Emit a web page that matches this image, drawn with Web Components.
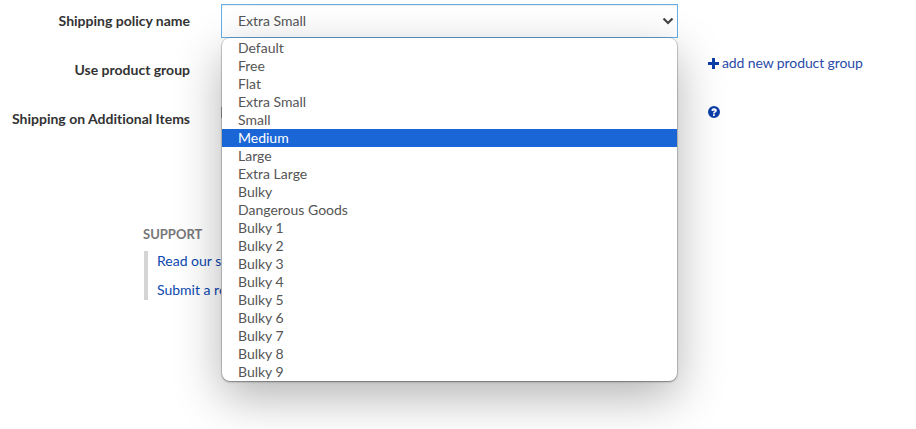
<!DOCTYPE html>
<html lang="en">
<head>
<meta charset="utf-8">
<title>Shipping</title>
<style>
    html, body { margin: 0; height: 429px; overflow: hidden; background: #fff; }
    body { font-family: Lato, "Open Sans", sans-serif; font-size: 14px; color: #444; }
</style>
</head>
<body>
<shipping-page>
    <form-row label="Shipping policy name" style="height:49px">
        <policy-select value="Extra Small" selected="Medium"></policy-select>
    </form-row>
    <form-row label="Use product group" style="height:49px">
        <span slot="aside"><icon-link icon="plus">add new product group</icon-link></span>
    </form-row>
    <form-row label="Shipping on Additional Items" style="height:49px">
        <hidden-edge></hidden-edge>
        <span slot="aside"><icon-link icon="help"></icon-link></span>
    </form-row>
    <support-links heading="SUPPORT">
        <a href="#">Read our s</a>
        <a href="#">Submit a re</a>
    </support-links>
</shipping-page>

<script>
const OPTIONS = ['Default', 'Free', 'Flat', 'Extra Small', 'Small', 'Medium', 'Large', 'Extra Large', 'Bulky', 'Dangerous Goods',
    'Bulky 1', 'Bulky 2', 'Bulky 3', 'Bulky 4', 'Bulky 5', 'Bulky 6', 'Bulky 7', 'Bulky 8', 'Bulky 9'];

class ShippingPage extends HTMLElement {
    connectedCallback() {
        this.attachShadow({ mode: 'open' });
        this.shadowRoot.innerHTML = `
            <style>
                :host { display: block; padding-top: 4px; }
            </style>
            <slot></slot>
        `;
    }
}

class FormRow extends HTMLElement {
    connectedCallback() {
        this.attachShadow({ mode: 'open' });
        this.shadowRoot.innerHTML = `
            <style>
                :host { display: grid; grid-template-columns: 190px 457px auto; column-gap: 31px; box-sizing: border-box; }
                .label { font-weight: 700; color: #333; text-align: right; line-height: 34px; white-space: nowrap; letter-spacing: -0.01px; }
                .aside { margin-left: -1px; line-height: 20px; }
            </style>
            <div class="label">${this.getAttribute('label')}</div>
            <div class="control"><slot></slot></div>
            <div class="aside"><slot name="aside"></slot></div>
        `;
    }
}

// the control under the open list only shows as a sliver on its left edge
class HiddenEdge extends HTMLElement {
    connectedCallback() {
        this.attachShadow({ mode: 'open' });
        this.shadowRoot.innerHTML = `
            <style>
                :host { display: block; width: 1px; height: 11px; margin-top: 5px; background: #aaa; }
            </style>
        `;
    }
}

class PolicySelect extends HTMLElement {
    connectedCallback() {
        this.attachShadow({ mode: 'open' });
        const selected = this.getAttribute('selected');
        this.shadowRoot.innerHTML = `
            <style>
                :host { display: block; position: relative; width: 457px; }
                .box {
                    display: flex; align-items: center; justify-content: space-between;
                    box-sizing: border-box; height: 34px; padding: 0 3px 0 16px;
                    border: 1px solid #66afe9; color: #555; background: #fff;
                    box-shadow: inset 0 1px 1px rgba(0,0,0,.075);
                }
                .box span { margin-top: -2px; }
                .list {
                    position: absolute; left: 1px; top: 34px; width: 455px; z-index: 10;
                    box-sizing: border-box; height: 343px; padding-top: 1px; overflow: hidden;
                    background: #fff; border-radius: 8px;
                    box-shadow: 0 0 0 1px rgba(0,0,0,.12), 0 1px 2px rgba(0,0,0,.35), 0 16px 48px rgba(0,0,0,.3);
                }
                .opt { height: 18px; line-height: 18px; padding-left: 16px; color: #555; white-space: nowrap; }
                .opt.on { background: #1a66d6; color: #fff; }
                svg { display: block; }
            </style>
            <div class="box">
                <span>${this.getAttribute('value')}</span>
                <svg width="12" height="12" viewBox="0 0 12 12"><path d="M1.500 3.500 L6 8 L10.500 3.500" fill="none" stroke="#444" stroke-width="2.2"/></svg>
            </div>
            <div class="list">
                ${OPTIONS.map(o => `<div class="opt ${o === selected ? 'on' : ''}">${o}</div>`).join('')}
            </div>
        `;
    }
}

class IconLink extends HTMLElement {
    connectedCallback() {
        this.attachShadow({ mode: 'open' });
        const icons = {
            plus: '<svg width="11" height="11" viewBox="0 0 11 11"><path d="M4 0h3v4h4v3H7v4H4V7H0V4h4z" fill="#0b3fa8"/></svg>',
            help: '<svg width="12" height="12" viewBox="0 0 12 12"><path fill-rule="evenodd" fill="#0b3fa8" d="M6 0a6 6 0 1 1 0 12A6 6 0 0 1 6 0zM3.400 4.500l1.600.7C5.100 4.700 5.400 4.400 6 4.400c.5 0 .8.2.8.500 0 .7-1.800.8-1.800 2.400v.2h1.800c0-1.100 2-1 2-3 0-1.300-1.300-2.200-2.800-2.200-1.300 0-2.100.6-2.600 1.700zM5 8.300V10h1.800V8.300z"/></svg>'
        };
        this.shadowRoot.innerHTML = `
            <style>
                :host { display: inline-flex; align-items: center; gap: 3px; height: 20px; color: #2a4ba8; white-space: nowrap; letter-spacing: -0.1px; }
            </style>
            ${icons[this.getAttribute('icon')]}
            <slot></slot>
        `;
    }
}

class SupportLinks extends HTMLElement {
    connectedCallback() {
        this.attachShadow({ mode: 'open' });
        this.shadowRoot.innerHTML = `
            <style>
                :host { display: block; margin: 74px 0 0 143px; }
                h4 { margin: 0 0 8px; font-size: 13px; line-height: 18px; font-weight: 700; color: #777; }
                .list {
                    display: flex; flex-direction: column; gap: 10px; overflow: hidden;
                    box-sizing: content-box; width: 64px; height: 49px;
                    margin-left: 1px; padding-left: 9px; border-left: 4px solid #d4d4d4;
                }
                ::slotted(a) { color: #0b48b0; text-decoration: none; line-height: 19px; white-space: nowrap; }
            </style>
            <h4>${this.getAttribute('heading')}</h4>
            <div class="list"><slot></slot></div>
        `;
    }
}

customElements.define('shipping-page', ShippingPage);
customElements.define('form-row', FormRow);
customElements.define('hidden-edge', HiddenEdge);
customElements.define('policy-select', PolicySelect);
customElements.define('icon-link', IconLink);
customElements.define('support-links', SupportLinks);
</script>
</body>
</html>
